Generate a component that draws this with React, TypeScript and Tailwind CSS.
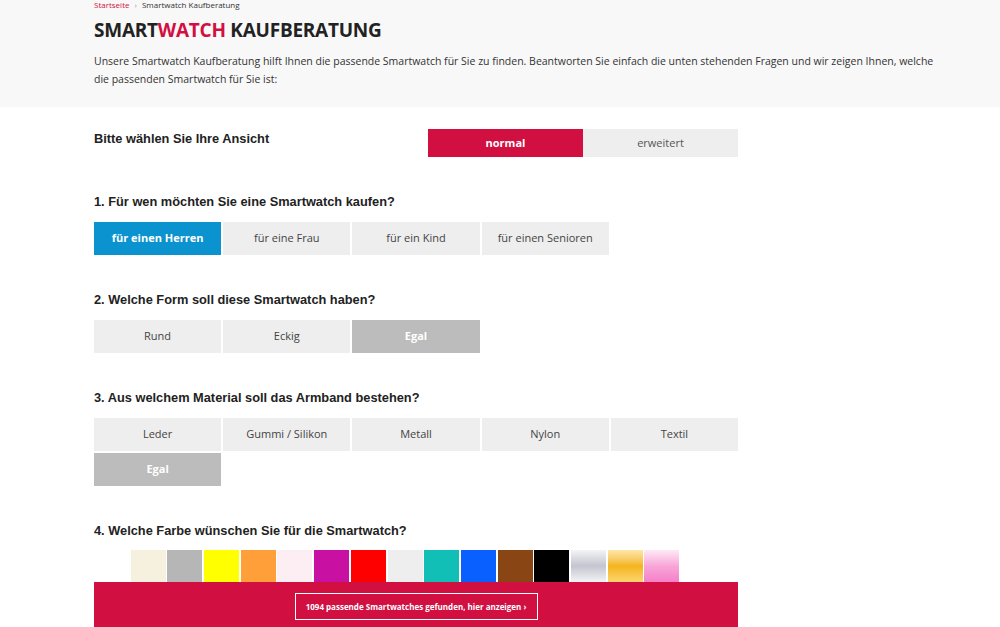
import React from "react";

const sans = { fontFamily: '"Open Sans", "Noto Sans", sans-serif' };

function Btn({ label, variant = "default" }: { label: string; variant?: "default" | "blue" | "gray" }) {
  const cls =
    variant === "blue"
      ? "bg-[#0a93cf] text-white font-bold"
      : variant === "gray"
      ? "bg-[#bcbcbc] text-white font-bold"
      : "bg-[#eeeeee] text-[#444]";
  return (
    <div className={`h-[33px] flex items-center justify-center text-[11px] ${cls}`}>{label}</div>
  );
}

function Heading({ children }: { children: React.ReactNode }) {
  return (
    <h2 className="text-[12.8px] font-bold text-[#222] font-['Liberation_Sans',Arial,sans-serif] leading-[16px]">
      {children}
    </h2>
  );
}

const swatches = [
  "bg-white",
  "bg-[#f6f1de]",
  "bg-[#b6b6b6]",
  "bg-[#ffff00]",
  "bg-[#ff9f3a]",
  "bg-[#fdeef3]",
  "bg-[#c810a3]",
  "bg-[#ff0000]",
  "bg-[#eeeeee]",
  "bg-[#12bfb6]",
  "bg-[#0a60ff]",
  "bg-[#8a4514]",
  "bg-black",
  "bg-gradient-to-b from-[#f4f4f6] via-[#c3c5cf] to-[#f4f4f6]",
  "bg-gradient-to-b from-[#ffe7a6] via-[#f3b512] to-[#ffd56a]",
  "bg-gradient-to-b from-[#fde9f6] via-[#f7a6d8] to-[#f67fc8]",
];

export default function App() {
  return (
    <div className="w-[1000px] h-[627px] overflow-hidden bg-white" style={sans}>
      <div className="bg-[#f8f8f8] h-[107px] pl-[94px] pr-[50px]">
        <div className="text-[8px] leading-[10px] pt-[0px] text-[#333]">
          <span className="text-[#d20f41]">Startseite</span>
          <span className="mx-[5px] text-[#999]">›</span>
          <span>Smartwatch Kaufberatung</span>
        </div>
        <h1 className="mt-[8px] text-[19px] leading-[24px] font-bold text-[#222] tracking-[-0.25px]">
          SMART<span className="text-[#d20f41]">WATCH</span> KAUFBERATUNG
        </h1>
        <p className="mt-[10px] text-[10.5px] leading-[18px] text-[#333] pr-[4px]">
          Unsere Smartwatch Kaufberatung hilft Ihnen die passende Smartwatch für Sie zu finden. Beantworten Sie einfach die unten stehenden Fragen und wir zeigen Ihnen, welche die passenden Smartwatch für Sie ist:
        </p>
      </div>

      <div className="pl-[94px] w-[738px]">
        <div className="mt-[22px] flex justify-between items-start">
          <div className="pt-[2px]">
            <Heading>Bitte wählen Sie Ihre Ansicht</Heading>
          </div>
          <div className="flex w-[310px]">
            <div className="w-[155px] h-[28px] bg-[#d20f41] text-white text-[11px] font-bold flex items-center justify-center">normal</div>
            <div className="w-[155px] h-[28px] bg-[#eeeeee] text-[#555] text-[11px] flex items-center justify-center">erweitert</div>
          </div>
        </div>

        <div className="mt-[37px]">
          <Heading>1. Für wen möchten Sie eine Smartwatch kaufen?</Heading>
          <div className="mt-[12px] grid grid-cols-5 gap-[2px] w-[644px]">
            <Btn label="für einen Herren" variant="blue" />
            <Btn label="für eine Frau" />
            <Btn label="für ein Kind" />
            <Btn label="für einen Senioren" />
          </div>
        </div>

        <div className="mt-[37px]">
          <Heading>2. Welche Form soll diese Smartwatch haben?</Heading>
          <div className="mt-[12px] grid grid-cols-5 gap-[2px] w-[644px]">
            <Btn label="Rund" />
            <Btn label="Eckig" />
            <Btn label="Egal" variant="gray" />
          </div>
        </div>

        <div className="mt-[37px]">
          <Heading>3. Aus welchem Material soll das Armband bestehen?</Heading>
          <div className="mt-[12px] grid grid-cols-5 gap-[2px] w-[644px]">
            <Btn label="Leder" />
            <Btn label="Gummi / Silikon" />
            <Btn label="Metall" />
            <Btn label="Nylon" />
            <Btn label="Textil" />
            <Btn label="Egal" variant="gray" />
          </div>
        </div>

        <div className="mt-[37px]">
          <Heading>4. Welche Farbe wünschen Sie für die Smartwatch?</Heading>
          <div className="mt-[11px] flex gap-[1.7px]">
            {swatches.map((c, i) => (
              <div key={i} className={`w-[35px] h-[32px] ${c}`} />
            ))}
          </div>
          <div className="w-[644px] h-[60px] bg-[#d20f41] flex justify-center pt-[11px]">
            <div className="h-[27px] w-[243px] border border-white flex items-center justify-center text-white text-[8px] font-bold">
              1094 passende Smartwatches gefunden, hier anzeigen ›
            </div>
          </div>
        </div>
      </div>
    </div>
  );
}
